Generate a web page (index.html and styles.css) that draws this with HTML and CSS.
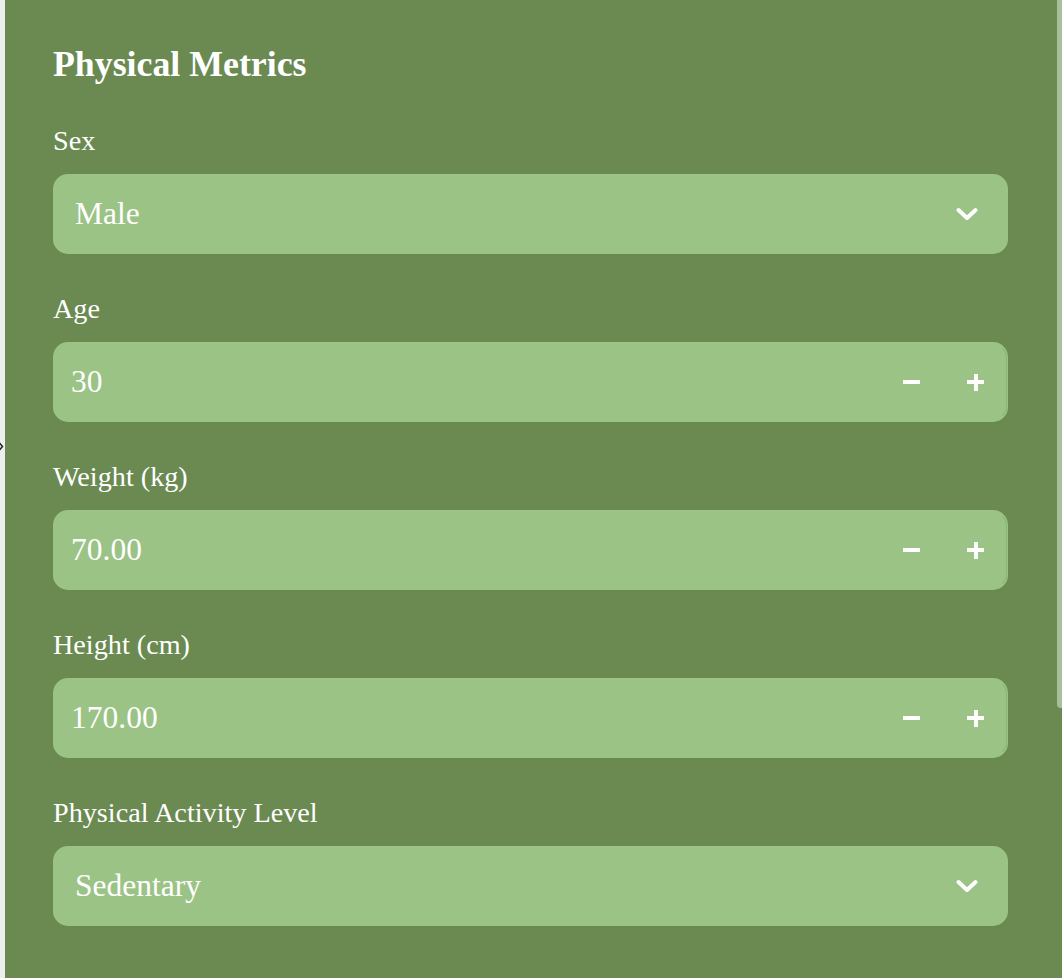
FILE: index.html
```html
<!DOCTYPE html>
<html lang="en">
<head>
<meta charset="utf-8">
<title>Physical Metrics</title>
<link rel="stylesheet" href="styles.css">
</head>
<body>
<div class="page">
  <aside class="rail">
    <svg class="rail-arrow" width="6" height="9" viewBox="0 0 6 9"><path d="M0.5 1 L3.5 4.5 L0.5 8" fill="none" stroke="#222" stroke-width="1.5"/></svg>
  </aside>
  <main class="panel">
    <h1 class="title">Physical Metrics</h1>
    <div class="fields">
      <div class="field">
        <div class="label">Sex</div>
        <div class="control select">
          <span class="value">Male</span>
          <svg class="chev" width="22" height="14" viewBox="0 0 22 14"><path d="M2.5 3 L11 11 L19.5 3" fill="none" stroke="#fff" stroke-width="4" stroke-linecap="round" stroke-linejoin="round"/></svg>
        </div>
      </div>
      <div class="field">
        <div class="label">Age</div>
        <div class="control number">
          <span class="value">30</span>
          <div class="steppers">
            <span class="step minus"></span>
            <span class="step plus"></span>
          </div>
        </div>
      </div>
      <div class="field">
        <div class="label">Weight (kg)</div>
        <div class="control number">
          <span class="value">70.00</span>
          <div class="steppers">
            <span class="step minus"></span>
            <span class="step plus"></span>
          </div>
        </div>
      </div>
      <div class="field">
        <div class="label">Height (cm)</div>
        <div class="control number">
          <span class="value">170.00</span>
          <div class="steppers">
            <span class="step minus"></span>
            <span class="step plus"></span>
          </div>
        </div>
      </div>
      <div class="field">
        <div class="label">Physical Activity Level</div>
        <div class="control select">
          <span class="value">Sedentary</span>
          <svg class="chev" width="22" height="14" viewBox="0 0 22 14"><path d="M2.5 3 L11 11 L19.5 3" fill="none" stroke="#fff" stroke-width="4" stroke-linecap="round" stroke-linejoin="round"/></svg>
        </div>
      </div>
    </div>
    <div class="scrollthumb"></div>
  </main>
</div>
</body>
</html>
```
FILE: styles.css
```css
html, body {
  margin: 0;
  padding: 0;
  height: 100%;
}
body {
  font-family: "Liberation Serif", "Times New Roman", serif;
  color: #ffffff;
  background: #6a8a52;
  overflow: hidden;
}
.page {
  display: flex;
  min-height: 978px;
}
.rail {
  width: 5px;
  flex: none;
  background: #edeef0;
  position: relative;
}
.rail-arrow {
  position: absolute;
  left: -1px;
  top: 442px;
}
.panel {
  flex: 1;
  position: relative;
  background: #6a8a52;
  padding: 43px 54px 0 48px;
}
.title {
  margin: 0 0 38px 0;
  font-size: 35.8px;
  line-height: 42px;
  font-weight: 700;
}
.fields {
  display: flex;
  flex-direction: column;
  gap: 37px;
}
.label {
  font-size: 28.2px;
  line-height: 34px;
  padding-top: 1px;
  margin-bottom: 16px;
}
.control {
  height: 80px;
  box-sizing: border-box;
  background: #9bc386;
  border-radius: 15px;
  display: flex;
  align-items: center;
  font-size: 31.5px;
}
.select {
  padding: 0 31px 0 22px;
}
.number {
  padding: 0 24px 0 18px;
  position: relative;
}
.number::after {
  content: "";
  position: absolute;
  top: 2px;
  right: 1px;
  bottom: 2px;
  width: 22px;
  border: 1px solid rgba(130, 175, 110, 0.7);
  border-left: none;
  border-top-color: transparent;
  border-bottom-color: transparent;
  border-radius: 0 14px 14px 0;
  pointer-events: none;
}
.value {
  flex: 1;
}
.chev {
  display: block;
  flex: none;
  margin-right: -1px;
}
.steppers {
  display: flex;
  align-items: center;
  gap: 47px;
}
.step {
  width: 17px;
  height: 17px;
  position: relative;
  display: block;
}
.step::before,
.step::after {
  content: "";
  position: absolute;
  background: #ffffff;
}
.step::before {
  left: 0;
  right: 0;
  top: 6.5px;
  height: 4px;
}
.plus::after {
  top: 0;
  bottom: 0;
  left: 6.5px;
  width: 4px;
}
.minus::after {
  display: none;
}
.scrollthumb {
  position: absolute;
  top: 0;
  right: 0;
  width: 5px;
  height: 708px;
  background: #a9bf9b;
  border-radius: 0 0 0 4px;
}
```
